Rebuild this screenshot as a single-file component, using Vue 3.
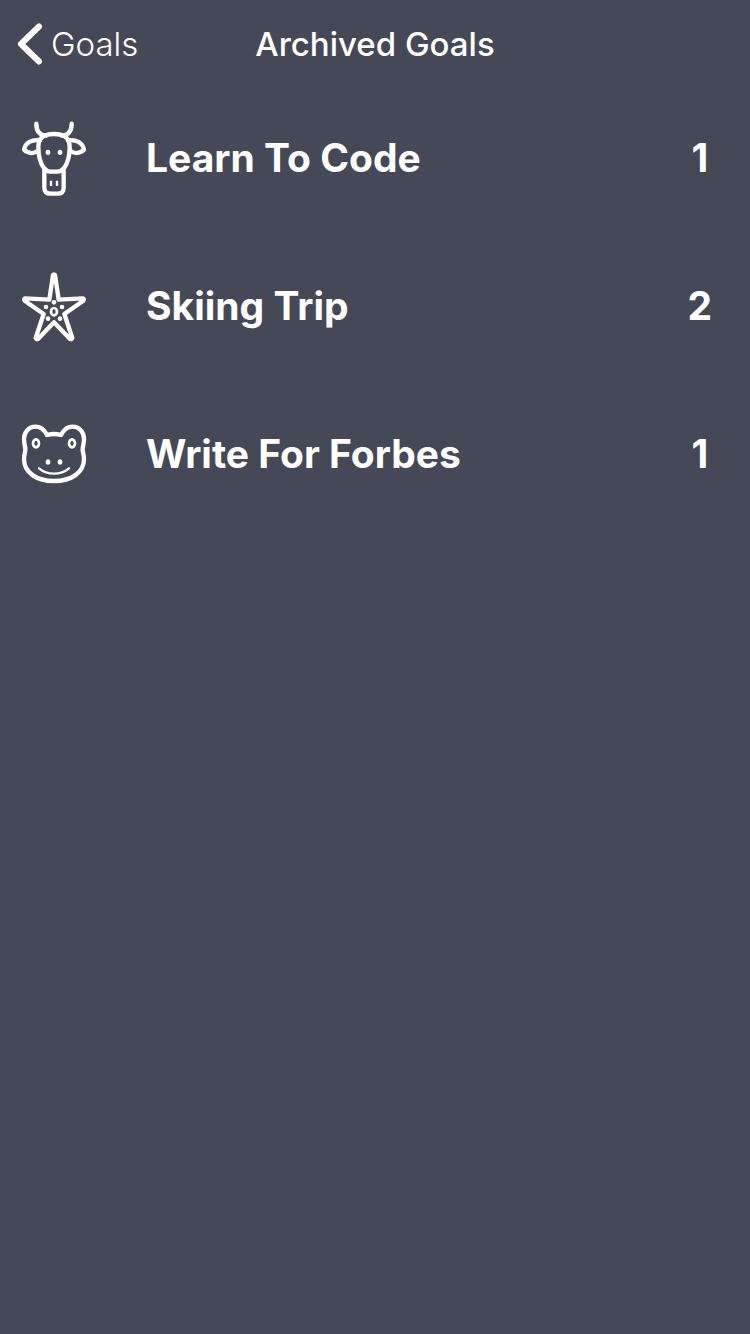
<script setup>
const goals = [
  { name: 'Learn To Code', count: 1, icon: 'cow' },
  { name: 'Skiing Trip', count: 2, icon: 'starfish' },
  { name: 'Write For Forbes', count: 1, icon: 'frog' },
]
</script>

<template>
  <div class="screen">
    <header class="nav">
      <a class="back" href="#goals">
        <svg class="chevron" viewBox="0 0 26 42" aria-hidden="true">
          <path d="M22 3.500 4 21l18 17.500" />
        </svg>
        <span>Goals</span>
      </a>
      <h1 class="title">Archived Goals</h1>
    </header>
    <main>
      <ul class="list">
        <li v-for="goal in goals" :key="goal.name" class="row">
          <svg v-if="goal.icon === 'cow'" class="icon" viewBox="0 -3 240 270" aria-hidden="true">
            <path d="M67 29C67 50 76 63 96 65M173 29c0 21-9 34-29 36" />
            <path d="M120 60C87 60 73 73 73 99c0 25 4 45 16 62 6 8 12 12 20 12h22c8 0 14-4 20-12 12-17 16-37 16-62 0-26-14-39-47-39Z" />
            <path d="M78 79C54 75 34 86 30 107c14 13 30 13 42 3M162 79c24-4 44 7 48 28-14 13-30 13-42 3" />
            <path d="M91 169v52q0 18 19 18h20q19 0 19-18v-52" />
            <ellipse class="solid" cx="102" cy="115" rx="7" ry="8" />
            <ellipse class="solid" cx="138" cy="115" rx="7" ry="8" />
            <path class="thin" d="M111 200v16M129 200v16" />
          </svg>
          <svg v-else-if="goal.icon === 'starfish'" class="icon" viewBox="0 -9 240 270" aria-hidden="true">
            <path d="M117 33q3-4 6 0l11 74 73-4q5 3 1 7l-57 40 24 72q-2 5-7 3l-48-50-48 50q-5 2-7-3l24-72-57-40q-4-4 1-7l73 4Z" />
            <ellipse class="ring" cx="120" cy="143" rx="9" ry="11" />
            <g class="solid">
              <circle cx="120" cy="115" r="7" />
              <circle cx="96" cy="129" r="7" />
              <circle cx="144" cy="129" r="7" />
              <circle cx="102" cy="164" r="7" />
              <circle cx="138" cy="164" r="7" />
            </g>
          </svg>
          <svg v-else class="icon" viewBox="0 -21 240 270" aria-hidden="true">
            <path d="M99 57q21-6 42 0C150 40 159 32 175 32c22 0 35 17 35 38 0 12-4 22-4 31 0 8 4 15 4 28 0 41-38 66-90 66s-90-25-90-66c0-13 4-20 4-28 0-9-4-19-4-31 0-21 13-38 35-38 16 0 25 8 34 25Z" />
            <ellipse class="ring" cx="66" cy="82" rx="9" ry="12" />
            <ellipse class="ring" cx="174" cy="82" rx="9" ry="12" />
            <ellipse class="solid" cx="102" cy="138" rx="7" ry="8" />
            <ellipse class="solid" cx="138" cy="138" rx="7" ry="8" />
            <path class="smile" d="M75 157q19 16 45 16t45-16" />
          </svg>
          <span class="name">{{ goal.name }}</span>
          <span class="count">{{ goal.count }}</span>
        </li>
      </ul>
    </main>
  </div>
</template>

<style>
body {
  background: #454857;
}
</style>

<style scoped>
.screen {
  box-sizing: border-box;
  min-height: 100vh;
  background: #454857;
  color: #fff;
  font-family: Inter, "Liberation Sans", sans-serif;
}
.nav {
  display: grid;
  grid-template-columns: 1fr auto 1fr;
  align-items: center;
  box-sizing: border-box;
  min-height: 84px;
  padding: 4px 17px 0;
}
.back {
  display: flex;
  align-items: center;
  gap: 8px;
  color: inherit;
  font-size: 33px;
  font-weight: 300;
  line-height: 40px;
  text-decoration: none;
}
.chevron {
  width: 26px;
  height: 42px;
  fill: none;
  stroke: #fff;
  stroke-width: 6;
  stroke-linecap: round;
  stroke-linejoin: round;
}
.title {
  margin: 0;
  font-size: 33px;
  font-weight: 500;
  line-height: 40px;
}
.list {
  margin: 0;
  padding: 0;
  list-style: none;
}
.row {
  display: flex;
  align-items: center;
  min-height: 148px;
  padding: 0 38px 0 14px;
  font-size: 39px;
  font-weight: 700;
  line-height: 48px;
}
.icon {
  flex: none;
  width: 80px;
  height: 90px;
  margin-right: 52px;
  fill: none;
  stroke: #fff;
  stroke-width: 13;
  stroke-linecap: round;
  stroke-linejoin: round;
}
.icon .solid {
  fill: #fff;
  stroke: none;
}
.icon .thin {
  stroke-width: 7;
  stroke-linecap: butt;
}
.icon .ring {
  stroke-width: 8;
}
.icon .smile {
  stroke-width: 7;
}
.name {
  flex: 1;
}
.count {
  min-width: 24px;
  text-align: center;
}
</style>
